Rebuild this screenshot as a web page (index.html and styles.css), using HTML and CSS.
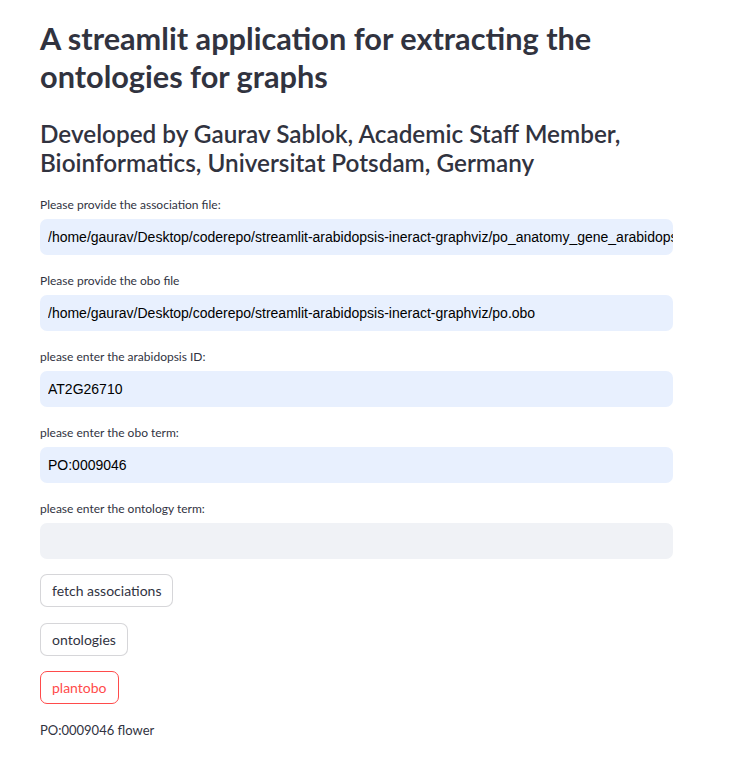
FILE: index.html
```html
<!DOCTYPE html>
<html>
<head>
<meta charset="utf-8">
<link rel="stylesheet" href="styles.css">
</head>
<body>
<main class="main">
  <h1 class="title">A streamlit application for extracting the ontologies for graphs</h1>
  <h2 class="subtitle">Developed by Gaurav Sablok, Academic Staff Member, Bioinformatics, Universitat Potsdam, Germany</h2>

  <div class="field">
    <label class="label" for="f1">Please provide the association file:</label>
    <input id="f1" class="input filled" type="text" value="/home/gaurav/Desktop/coderepo/streamlit-arabidopsis-ineract-graphviz/po_anatomy_gene_arabidopsis.assoc">
  </div>
  <div class="field">
    <label class="label" for="f2">Please provide the obo file</label>
    <input id="f2" class="input filled" type="text" value="/home/gaurav/Desktop/coderepo/streamlit-arabidopsis-ineract-graphviz/po.obo">
  </div>
  <div class="field">
    <label class="label" for="f3">please enter the arabidopsis ID:</label>
    <input id="f3" class="input filled" type="text" value="AT2G26710">
  </div>
  <div class="field">
    <label class="label" for="f4">please enter the obo term:</label>
    <input id="f4" class="input filled" type="text" value="PO:0009046">
  </div>
  <div class="field">
    <label class="label" for="f5">please enter the ontology term:</label>
    <input id="f5" class="input empty" type="text" value="">
  </div>

  <div class="buttons">
    <button class="btn">fetch associations</button>
    <button class="btn">ontologies</button>
    <button class="btn active">plantobo</button>
  </div>

  <p class="result">PO:0009046 flower</p>
</main>
</body>
</html>
```
FILE: styles.css
```css
* { box-sizing: border-box; }
body {
  margin: 0;
  background: #ffffff;
  color: rgb(49, 51, 63);
  font-family: Lato, "Noto Sans", sans-serif;
}
.main {
  width: 633px;
  margin-left: 40px;
  padding-top: 20px;
  display: flex;
  flex-direction: column;
}
.title {
  margin: 0;
  font-size: 30.7px;
  line-height: 38px;
  font-weight: 700;
}
.subtitle {
  margin: 24px 0 0;
  font-size: 24.3px;
  line-height: 28.5px;
  font-weight: 600;
}
.field {
  display: flex;
  flex-direction: column;
  gap: 6px;
  margin-top: 20px;
}
.field + .field { margin-top: 18px; }
.label {
  font-size: 12px;
  line-height: 16px;
}
.input {
  display: block;
  width: 100%;
  height: 36px;
  border: none;
  outline: none;
  border-radius: 7px;
  padding: 0 0 0 8px;
  margin: 0;
  font-size: 14px;
  color: #000;
  font-family: "Liberation Sans", Arial, sans-serif;
}
.filled { background: rgb(232, 240, 254); }
.empty { background: rgb(240, 242, 246); }
.buttons {
  display: flex;
  flex-direction: column;
  align-items: flex-start;
  gap: 15.5px;
  margin-top: 15px;
}
.btn {
  height: 33px;
  padding: 0 11px;
  border: 1px solid rgba(49, 51, 63, 0.2);
  border-radius: 7px;
  background: #fff;
  color: rgb(49, 51, 63);
  font-family: inherit;
  font-size: 14px;
}
.btn.active {
  border-color: rgb(255, 75, 75);
  color: rgb(255, 75, 75);
}
.result {
  margin: 17px 0 0;
  font-size: 13px;
  line-height: 18px;
}
```
